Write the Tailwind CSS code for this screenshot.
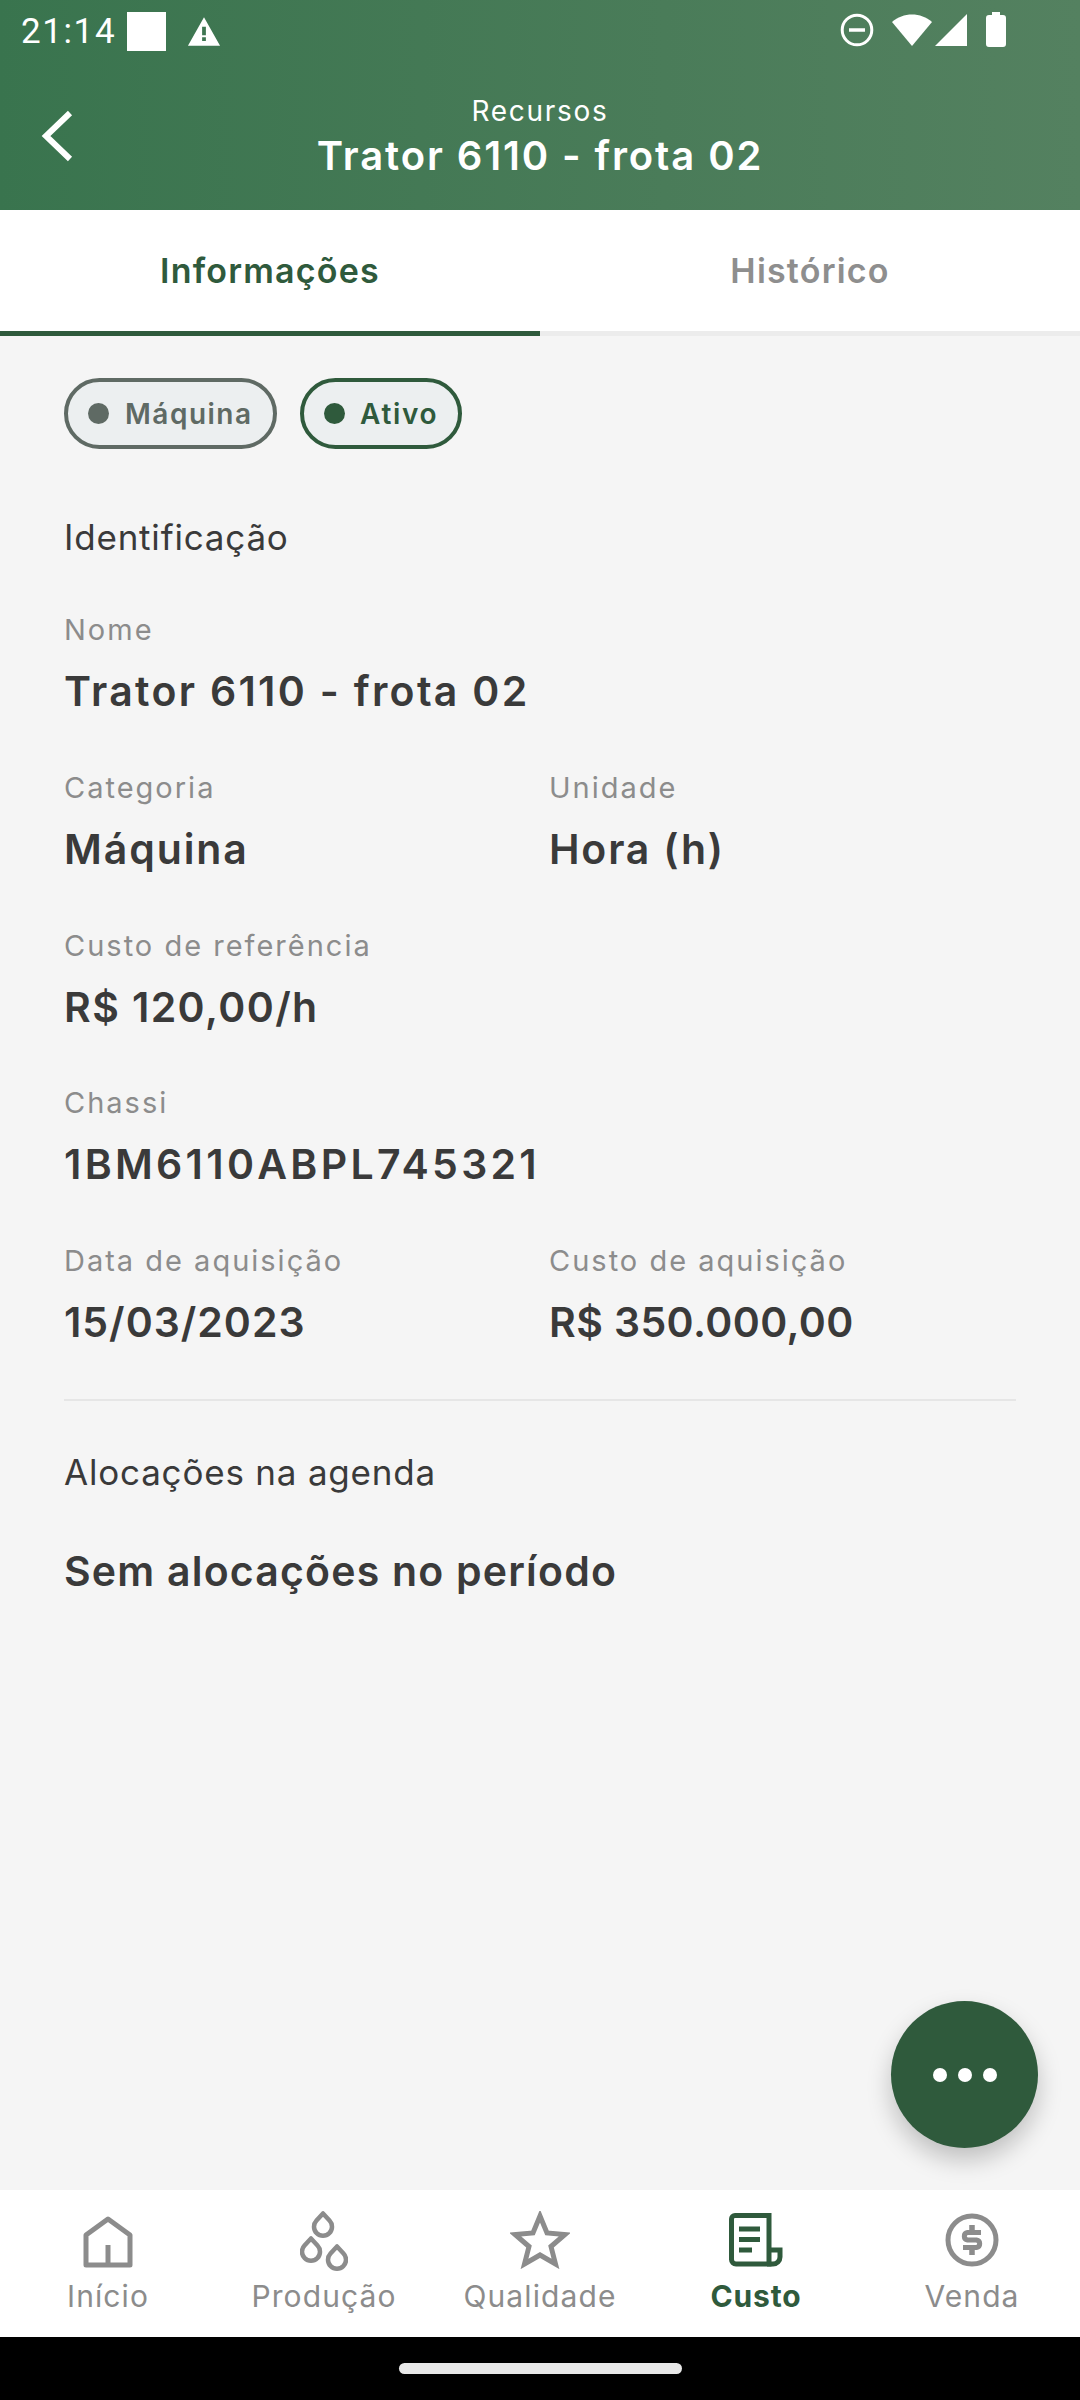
<!DOCTYPE html>
<html lang="pt-BR">
<head>
  <meta charset="UTF-8" />
  <meta name="viewport" content="width=device-width, initial-scale=1.0"/>
  <title>Recursos</title>
  <script src="https://cdn.jsdelivr.net/npm/@tailwindcss/browser@4"></script>
</head>
<body class="bg-[#f5f5f5]">
  <div class="relative w-[1080px] h-[2400px] flex flex-col overflow-hidden bg-[#f5f5f5] font-['Inter',sans-serif] text-[#3a3a3a]">

    <!-- status bar + header -->
    <header class="h-[210px] shrink-0 bg-linear-to-r from-[#39744e] to-[#548160] text-white">
      <div class="h-[62px] flex items-start justify-between pl-[21px] pr-[74px] pt-[12px]">
        <div class="flex items-center">
          <span class="font-['Roboto',sans-serif] text-[35px] leading-[39px] tracking-[1.6px]">21:14</span>
          <div class="ml-[11px] w-[39px] h-[39px] bg-white"></div>
          <svg class="ml-[21px]" width="34" height="31" viewBox="0 0 36 32"><path fill-rule="evenodd" fill="#fff" d="M18 1 L35 31 H1 Z M16 11 V20 H20 V11 Z M16 22 V26 H20 V22 Z"/></svg>
        </div>
        <div class="flex items-center">
          <svg width="34" height="34" viewBox="0 0 34 34" fill="none" stroke="#fff"><circle cx="17" cy="17" r="14.8" stroke-width="3"/><path d="M9 17 H25" stroke-width="3.5"/></svg>
          <svg class="ml-[18px]" width="40" height="34" viewBox="0 0 40 34"><path fill="#fff" d="M20 33 L0 9 C11 -1 29 -1 40 9 Z"/></svg>
          <svg class="ml-[3px]" width="32" height="34" viewBox="0 0 32 34"><path fill="#fff" d="M32 1 V33 H0 Z"/></svg>
          <svg class="ml-[19px]" width="20" height="35" viewBox="0 0 20 35"><path fill="#fff" d="M6 0 H14 V3 H17 A3 3 0 0 1 20 6 V32 A3 3 0 0 1 17 35 H3 A3 3 0 0 1 0 32 V6 A3 3 0 0 1 3 3 H6 Z"/></svg>
        </div>
      </div>
      <div class="relative flex flex-col items-center pt-[31px]">
        <svg class="absolute left-[40px] top-[48px]" width="34" height="52" viewBox="0 0 34 52" fill="none" stroke="#fff" stroke-width="6"><path d="M30 3 L6 26 L30 49"/></svg>
        <span class="text-[28px] leading-[36px] tracking-[1.7px] font-normal">Recursos</span>
        <span class="mt-[3px] text-[40px] leading-[48px] tracking-[1.9px] font-semibold">Trator 6110 - frota 02</span>
      </div>
    </header>

    <!-- tabs -->
    <nav class="h-[126px] shrink-0 bg-white grid grid-cols-2">
      <div class="flex items-center justify-center border-b-[5px] border-[#2f5a3c] text-[#2f5a3c] text-[34px] font-semibold tracking-[1.2px]">Informações</div>
      <div class="flex items-center justify-center border-b-[5px] border-[#ececec] text-[#8e8e8e] text-[34px] font-semibold tracking-[1.2px]">Histórico</div>
    </nav>

    <!-- content -->
    <main class="flex-1 px-[64px] pt-[42px]">
      <div class="flex gap-[23px]">
        <div class="w-[213px] h-[71px] flex items-center pl-[20px] gap-[16px] rounded-full border-[4px] border-[#5f6a64] bg-[#eceff0] text-[#5f6a64] text-[28px] font-semibold tracking-[1.5px]">
          <span class="w-[21px] h-[21px] rounded-full bg-[#5f6a64]"></span>Máquina
        </div>
        <div class="w-[162px] h-[71px] flex items-center pl-[20px] gap-[15px] rounded-full border-[4px] border-[#2f5a3c] bg-[#eceff0] text-[#2f5a3c] text-[28px] font-semibold tracking-[1.7px]">
          <span class="w-[21px] h-[21px] rounded-full bg-[#2f5a3c]"></span>Ativo
        </div>
      </div>

      <h2 class="mt-[65px] text-[35px] leading-[46px] tracking-[0.8px]">Identificação</h2>

      <div class="mt-[50px] h-[158px]">
        <p class="text-[29px] leading-[40px] tracking-[2px] text-[#8c8c8c]">Nome</p>
        <p class="mt-[13px] text-[41px] leading-[56px] tracking-[2.3px] font-semibold">Trator 6110 - frota 02</p>
      </div>
      <div class="grid grid-cols-[485px_1fr] h-[158px]">
        <div>
          <p class="text-[29px] leading-[40px] tracking-[2px] text-[#8c8c8c]">Categoria</p>
          <p class="mt-[13px] text-[41px] leading-[56px] tracking-[1.9px] font-semibold">Máquina</p>
        </div>
        <div>
          <p class="text-[29px] leading-[40px] tracking-[2px] text-[#8c8c8c]">Unidade</p>
          <p class="mt-[13px] text-[41px] leading-[56px] tracking-[1.8px] font-semibold">Hora (h)</p>
        </div>
      </div>
      <div class="h-[157px]">
        <p class="text-[29px] leading-[40px] tracking-[2px] text-[#8c8c8c]">Custo de referência</p>
        <p class="mt-[13px] text-[41px] leading-[56px] tracking-[1.4px] font-semibold">R$ 120,00/h</p>
      </div>
      <div class="h-[158px]">
        <p class="text-[29px] leading-[40px] tracking-[2px] text-[#8c8c8c]">Chassi</p>
        <p class="mt-[13px] text-[41px] leading-[56px] tracking-[3.3px] font-semibold">1BM6110ABPL745321</p>
      </div>
      <div class="grid grid-cols-[485px_1fr]">
        <div>
          <p class="text-[29px] leading-[40px] tracking-[2px] text-[#8c8c8c]">Data de aquisição</p>
          <p class="mt-[13px] text-[41px] leading-[56px] tracking-[1px] font-semibold">15/03/2023</p>
        </div>
        <div>
          <p class="text-[29px] leading-[40px] tracking-[2px] text-[#8c8c8c]">Custo de aquisição</p>
          <p class="mt-[13px] text-[41px] leading-[56px] tracking-[0.4px] font-semibold">R$ 350.000,00</p>
        </div>
      </div>

      <div class="mt-[49px] h-[2px] bg-[#e6e6e6]"></div>

      <h2 class="mt-[48px] text-[35px] leading-[46px] tracking-[0.8px]">Alocações na agenda</h2>
      <p class="mt-[48px] text-[41px] leading-[56px] tracking-[1.2px] font-semibold">Sem alocações no período</p>
    </main>

    <!-- fab -->
    <button class="absolute left-[891px] top-[2001px] w-[147px] h-[147px] rounded-full bg-[#2f5a3c] shadow-[0_12px_24px_rgba(0,0,0,0.22)] flex items-center justify-center gap-[11px]">
      <span class="w-[14px] h-[14px] rounded-full bg-white"></span>
      <span class="w-[14px] h-[14px] rounded-full bg-white"></span>
      <span class="w-[14px] h-[14px] rounded-full bg-white"></span>
    </button>

    <!-- bottom nav -->
    <footer class="h-[147px] shrink-0 bg-white grid grid-cols-5 text-[30px] leading-[38px] tracking-[1.1px] text-[#8c8c8c]">
      <div class="flex flex-col items-center">
        <div class="h-[87px] flex items-end pb-[9px]">
          <svg width="50" height="52" viewBox="0 0 50 52" fill="none" stroke="#8c8c8c" stroke-width="5" stroke-linejoin="round"><path d="M3 19 L25 3 L47 19 V49 H3 Z"/><path d="M25 29 V49"/></svg>
        </div>
        <span>Início</span>
      </div>
      <div class="flex flex-col items-center">
        <div class="h-[87px] flex items-end pb-[6px]">
          <svg width="48" height="60" viewBox="0 0 48 60" fill="none" stroke="#8c8c8c" stroke-width="4.5" stroke-linejoin="round">
            <path d="M23 2.500 L16.500 9.500 A9 9 0 1 0 29.500 9.500 Z"/>
            <path d="M11 27.500 L4.500 34.500 A9 9 0 1 0 17.500 34.500 Z"/>
            <path d="M37 35.500 L30.500 42.500 A9 9 0 1 0 43.500 42.500 Z"/>
          </svg>
        </div>
        <span>Produção</span>
      </div>
      <div class="flex flex-col items-center">
        <div class="h-[87px] flex items-end pb-[8px]">
          <svg width="60" height="58" viewBox="0 0 60 58" fill="none" stroke="#8c8c8c" stroke-width="5"><path d="M30 5 L37 22 L55 23.5 L41 35.5 L45.500 53 L30 44 L14.500 53 L19 35.500 L5 23.500 L23 22 Z"/></svg>
        </div>
        <span>Qualidade</span>
      </div>
      <div class="flex flex-col items-center font-bold text-[#2f5a3c] tracking-[0.8px]">
        <div class="h-[87px] flex items-end pb-[10px]">
          <svg width="54" height="54" viewBox="0 0 54 54" fill="none" stroke="#2f5a3c" stroke-width="5">
            <path d="M2.500 6 A3.500 3.500 0 0 1 6 2.500 H40 V51 H7 A4.500 4.500 0 0 1 2.500 46.500 Z"/>
            <path d="M40 37 H51 V44 A7 7 0 0 1 44 51 H38"/>
            <path d="M10 16 H31 M10 26.500 H31 M10 37 H23"/>
          </svg>
        </div>
        <span>Custo</span>
      </div>
      <div class="flex flex-col items-center">
        <div class="h-[87px] flex items-end pb-[10px]">
          <svg width="54" height="54" viewBox="0 0 54 54" fill="none" stroke="#8c8c8c" stroke-width="5"><circle cx="27" cy="27" r="24"/><path d="M36 19.500 H22.500 A3.800 3.800 0 0 0 22.500 27 H31.500 A3.800 3.800 0 0 1 31.500 34.500 H18"/><path d="M27 12 V19 M27 35 V42" stroke-width="5.500"/></svg>
        </div>
        <span>Venda</span>
      </div>
    </footer>

    <!-- android nav bar -->
    <div class="h-[63px] shrink-0 bg-black flex justify-center pt-[26px]">
      <div class="w-[283px] h-[11px] rounded-full bg-[#e8e8e8]"></div>
    </div>
  </div>
</body>
</html>
